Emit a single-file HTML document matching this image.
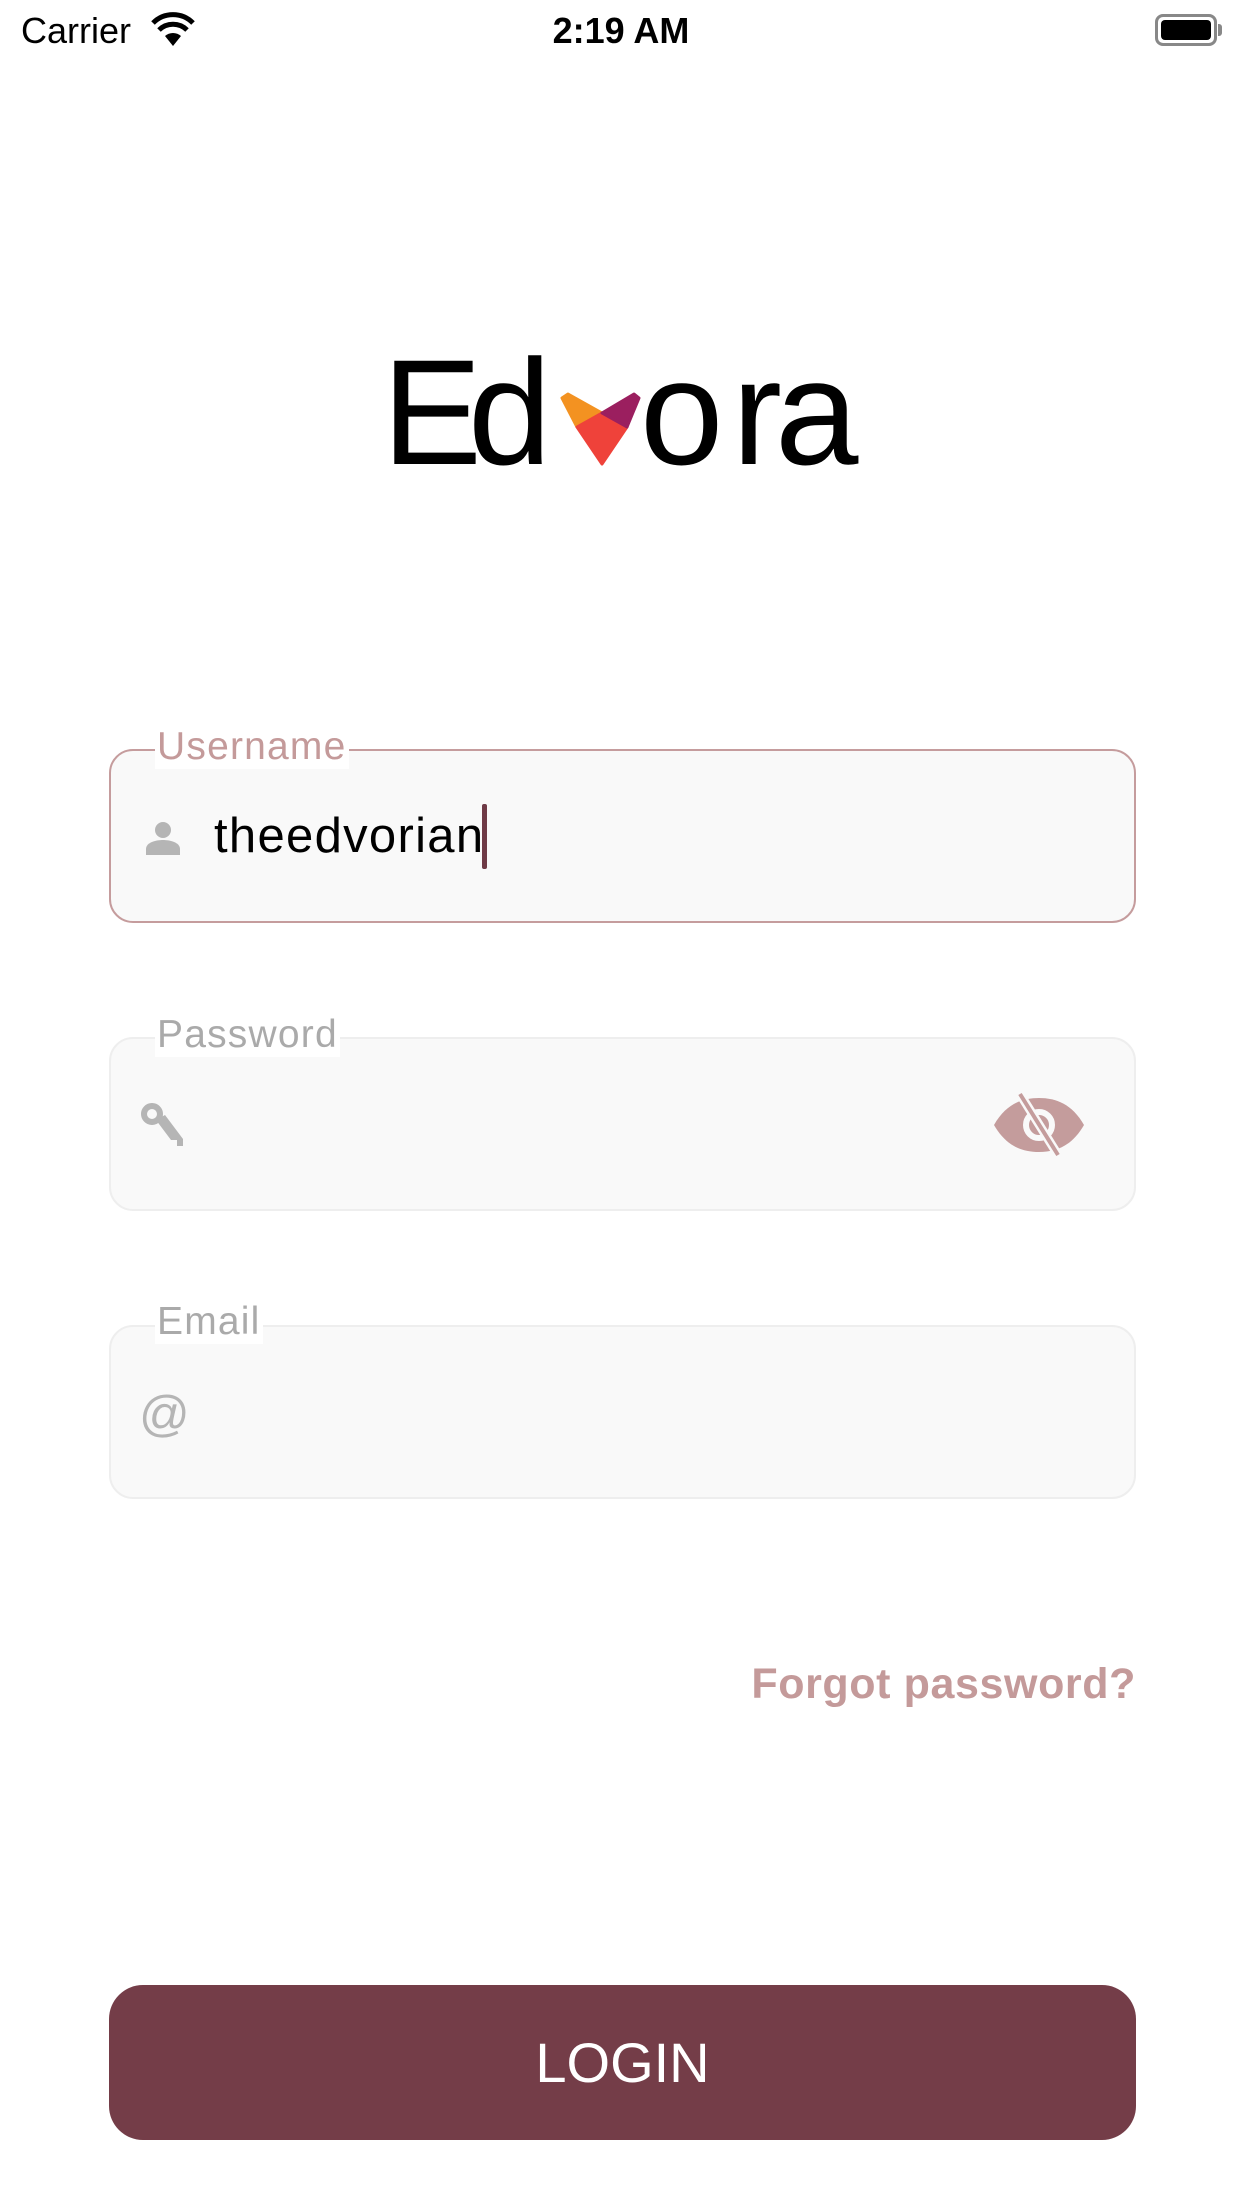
<!DOCTYPE html>
<html><head><meta charset="utf-8"><style>
*{margin:0;padding:0;box-sizing:border-box}
body{width:1242px;height:2208px;background:#fff;position:relative;overflow:hidden;font-family:"Liberation Sans",sans-serif}
.a{position:absolute}
.logo{position:absolute;font-size:150px;line-height:1;color:#000;top:337px}
.box{position:absolute;left:109px;width:1027px;height:174px;border-radius:24px;background:#f9f9f9;border:2px solid #eeeeee}
.lbl{position:absolute;left:155px;font-size:39px;letter-spacing:1.2px;background:#fff;padding:0 2px;line-height:44px;color:#aaa}
</style></head><body>
<div class="a" style="left:21px;top:10px;font-size:36px;color:#000">Carrier</div>
<svg class="a" style="left:150px;top:12px" width="46" height="36" viewBox="0 0 46 36"><path d="M23 34 L15 24 A12 12 0 0 1 31 24 Z" fill="#000"/><path d="M9 18 A20 20 0 0 1 37 18" stroke="#000" stroke-width="5" fill="none"/><path d="M3 11 A28 28 0 0 1 43 11" stroke="#000" stroke-width="5" fill="none"/></svg>
<div class="a" style="left:0;width:1242px;text-align:center;top:10px;font-size:36px;font-weight:bold;color:#000">2:19 AM</div>
<div class="a" style="left:1155px;top:14px;width:62px;height:32px;border:3px solid #888;border-radius:8px;padding:3px"><div style="width:100%;height:100%;background:#000;border-radius:4px"></div></div>
<div class="a" style="left:1218px;top:24px;width:4px;height:12px;background:#888;border-radius:0 3px 3px 0"></div>

<span class="logo" style="left:382px">E</span>
<span class="logo" style="left:468px">d</span>
<svg class="a" style="left:0;top:0" width="1242" height="500"><g stroke-linejoin="round"><polygon points="562,398 568,394 602,413 577,427" fill="#f39221" stroke="#f39221" stroke-width="3"/><polygon points="577,427 602,413 627,427 602,464" fill="#ef423a" stroke="#ef423a" stroke-width="3"/><polygon points="602,413 634,394 639,398 627,427" fill="#9b1f5f" stroke="#9b1f5f" stroke-width="3"/></g></svg>
<span class="logo" style="left:640px">o</span>
<span class="logo" style="left:732px">r</span>
<span class="logo" style="left:775px">a</span>

<div class="box" style="top:749px;border-color:#c59c9d"></div>
<div class="lbl" style="top:725px;color:#c49a9a">Username</div>
<svg class="a" style="left:145px;top:821px" width="36" height="34" viewBox="0 0 36 34"><circle cx="18" cy="9" r="8" fill="#b5b5b5"/><path d="M1 34 V28 C1 21 12 19 18 19 C24 19 35 21 35 28 V34 Z" fill="#b5b5b5"/></svg>
<div class="a" style="left:214px;top:808px;font-size:49px;letter-spacing:1.3px;color:#000">theedvorian</div>
<div class="a" style="left:482px;top:804px;width:5px;height:65px;background:#6f3a46;border-radius:2px"></div>

<div class="box" style="top:1037px"></div>
<div class="lbl" style="top:1013px">Password</div>
<svg class="a" style="left:141px;top:1103px" width="46" height="44" viewBox="0 0 46 44"><circle cx="11" cy="11" r="8" fill="none" stroke="#b5b5b5" stroke-width="6"/><path d="M15 17 L30 37 L36 37 L36 43 L42 43 L42 36 L24 12 Z" fill="#b5b5b5"/></svg>
<svg class="a" style="left:992px;top:1092px" width="94" height="66" viewBox="0 0 94 66"><path d="M2 33 C14 12 30 6 47 6 C64 6 80 12 92 33 C80 54 64 60 47 60 C30 60 14 54 2 33 Z" fill="#c49c9c"/><circle cx="47" cy="33" r="13" fill="none" stroke="#f9f9f9" stroke-width="6"/><path d="M28 2 L66 63" stroke="#f9f9f9" stroke-width="9"/><path d="M28 2 L66 63" stroke="#c49c9c" stroke-width="4"/></svg>

<div class="box" style="top:1325px"></div>
<div class="lbl" style="top:1300px">Email</div>
<div class="a" style="left:139px;top:1385px;font-size:50px;color:#b5b5b5">@</div>

<div class="a" style="right:106px;top:1660px;font-size:43px;letter-spacing:0.6px;font-weight:bold;color:#c49a9a">Forgot password?</div>

<div class="a" style="left:109px;top:1985px;width:1027px;height:155px;border-radius:34px;background:#743d48;color:#fff;font-size:56px;text-align:center;line-height:155px">LOGIN</div>
</body></html>
